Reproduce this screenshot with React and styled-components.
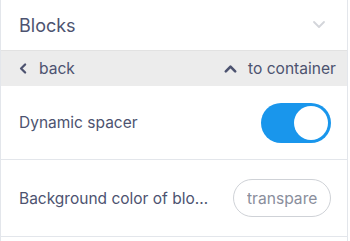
import React, { useState } from 'react';
import styled, { createGlobalStyle } from 'styled-components';

const GlobalStyle = createGlobalStyle`
  html, body {
    margin: 0;
    padding: 0;
    background: #fff;
  }
  body {
    font-family: Inter, 'Open Sans', 'Liberation Sans', sans-serif;
    color: #4d5370;
  }
`;

const Chevron = ({ dir = 'down', size = 14, color = '#4d5370', width = 2.4 }) => {
  const paths = {
    down: 'M3 5 L8 10 L13 5',
    up: 'M3 11 L8 6 L13 11',
    left: 'M10 3 L5 8 L10 13',
  };
  return (
    <svg width={size} height={size} viewBox='0 0 16 16' fill='none'>
      <path d={paths[dir]} stroke={color} strokeWidth={width} strokeLinecap='round' strokeLinejoin='round' />
    </svg>
  );
};

const App = () => {
  const [dynamic, setDynamic] = useState(true);

  return (
    <>
      <GlobalStyle />
      <Panel>
        <Header>
          <Title>Blocks</Title>
          <Chevron dir='down' size={16} color='#d3d5da' width={1.8} />
        </Header>
        <NavBar>
          <NavLink $gap={9}>
            <Chevron dir='left' size={13} width={2.8} />
            back
          </NavLink>
          <NavLink $gap={10}>
            <Chevron dir='up' size={15} width={2.8} />
            to container
          </NavLink>
        </NavBar>
        <Row>
          <Label>Dynamic spacer</Label>
          <Toggle $on={dynamic} onClick={() => setDynamic(!dynamic)}>
            <Knob $on={dynamic} />
          </Toggle>
        </Row>
        <Row $tall>
          <Label>Background color of blocks</Label>
          <PillInput defaultValue='transparent' />
        </Row>
      </Panel>
    </>
  );
};

export default App;

const Panel = styled.div`
  width: 346px;
  border-left: 1px solid #e3e6eb;
  border-right: 1px solid #e3e6eb;
  min-height: 241px;
  box-sizing: content-box;
`;

const Header = styled.div`
  height: 50px;
  display: flex;
  align-items: center;
  justify-content: space-between;
  padding: 0 20px 0 18px;
  box-sizing: border-box;
`;

const Title = styled.div`
  font-size: 18px;
  font-weight: 400;
  color: #4d5370;
`;

const NavBar = styled.div`
  height: 36px;
  background: #ececec;
  border-top: 1px solid #e2e2e2;
  display: flex;
  align-items: center;
  justify-content: space-between;
  padding: 0 11px 0 16px;
  box-sizing: border-box;
`;

const NavLink = styled.div`
  display: flex;
  align-items: center;
  gap: ${(p) => p.$gap}px;
  font-size: 15.6px;
  color: #4d5370;
`;

const Row = styled.div`
  height: ${(p) => (p.$tall ? '77px' : '74px')};
  display: flex;
  align-items: center;
  justify-content: space-between;
  padding: 0 16px 0 18px;
  border-bottom: 1px solid #e3e6eb;
  box-sizing: border-box;
  gap: 22px;
`;

const Label = styled.div`
  font-size: 15.5px;
  color: #4d5370;
  white-space: nowrap;
  overflow: hidden;
  text-overflow: ellipsis;
  min-width: 0;
  flex: 1;
`;

const Toggle = styled.div`
  width: 70px;
  height: 40px;
  border-radius: 20px;
  background: ${(p) => (p.$on ? '#1996ec' : '#d5d7dc')};
  display: flex;
  align-items: center;
  justify-content: ${(p) => (p.$on ? 'flex-end' : 'flex-start')};
  padding: 0 3px;
  box-sizing: border-box;
  flex-shrink: 0;
  cursor: pointer;
`;

const Knob = styled.div`
  width: 34px;
  height: 34px;
  border-radius: 50%;
  background: #fff;
`;

const PillInput = styled.input`
  width: 98px;
  height: 38px;
  border: 1px solid #cfd2d7;
  border-radius: 19px;
  padding: 0 12px 0 13px;
  box-sizing: border-box;
  font-family: Inter, 'Open Sans', 'Liberation Sans', sans-serif;
  font-size: 15.6px;
  color: #8a8e9c;
  background: #fff;
  outline: none;
  flex-shrink: 0;
`;
